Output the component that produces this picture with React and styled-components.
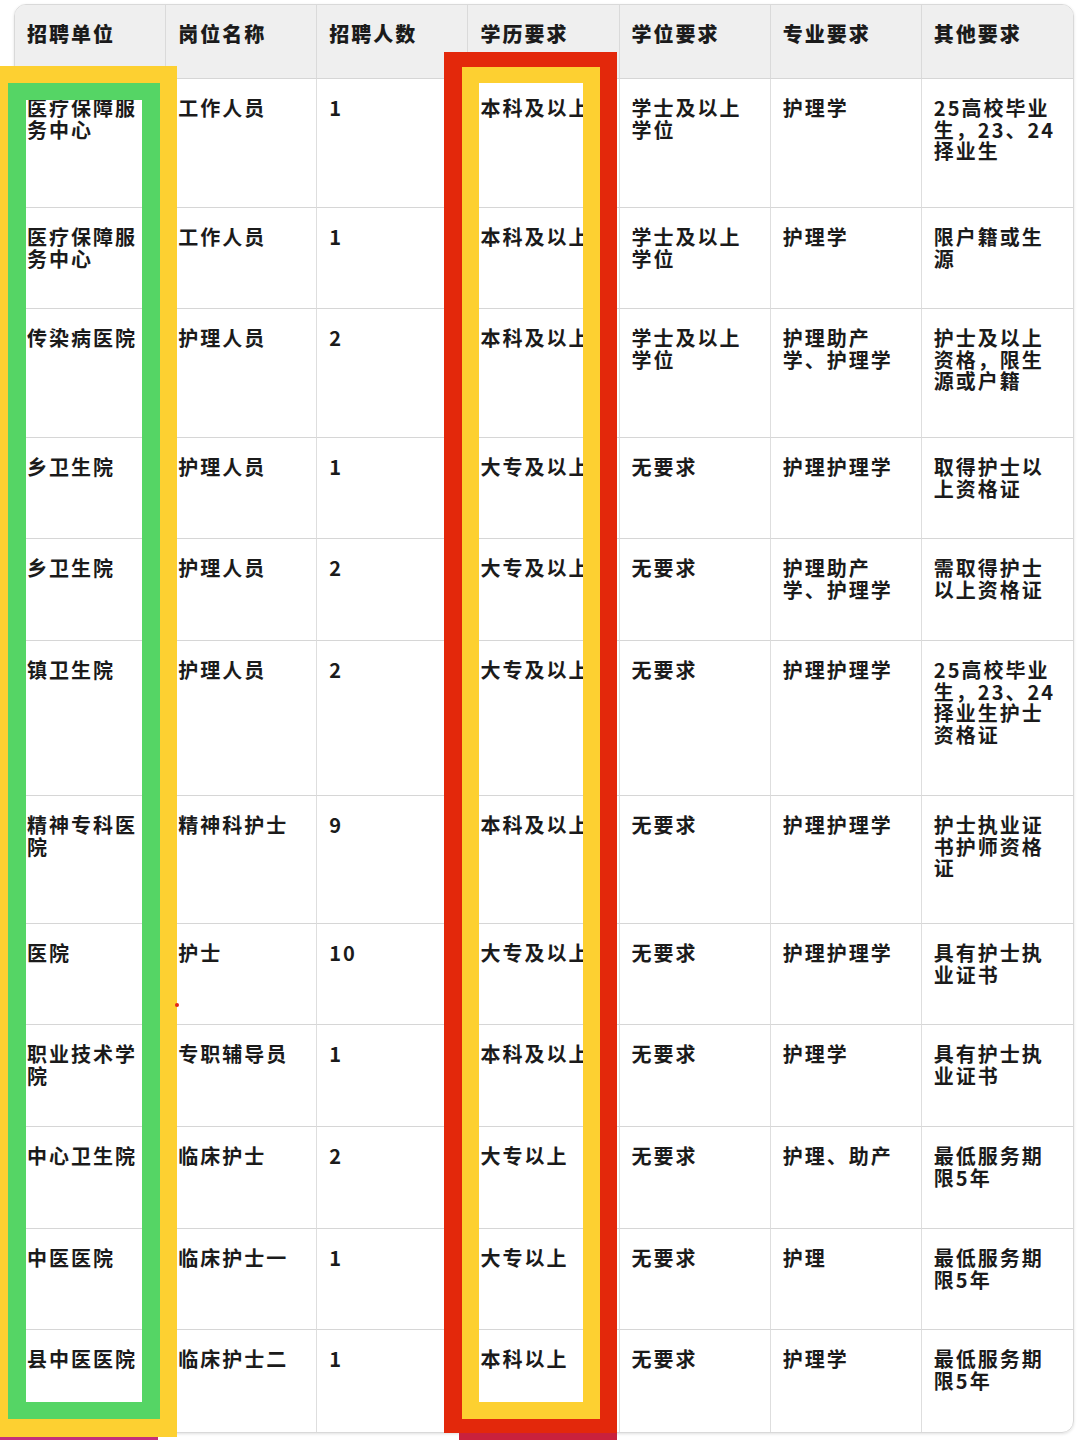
import React from 'react';
import styled, { createGlobalStyle } from 'styled-components';

const GlobalStyle = createGlobalStyle`
  html, body {
    margin: 0;
    padding: 0;
    background: #ffffff;
  }
  body {
    font-family: "Noto Sans CJK SC", "Noto Sans", sans-serif;
    color: #1b1b1b;
  }
`;

const Page = styled.div`
  position: relative;
  width: 1080px;
  height: 1440px;
  overflow: hidden;
  background: #ffffff;
  padding: 4px 6px 0 14px;
  box-sizing: border-box;
`;

const TableFrame = styled.div`
  width: 1060px;
  border: 1px solid #d9d9d9;
  border-radius: 12px;
  overflow: hidden;
  box-sizing: border-box;
  box-shadow: 0 1px 3px rgba(0, 0, 0, 0.12);
`;

const Table = styled.table`
  width: 100%;
  table-layout: fixed;
  border-collapse: separate;
  border-spacing: 0;
`;

const HeadCell = styled.th`
  background: #efefef;
  text-align: left;
  vertical-align: top;
  font-size: 20px;
  font-weight: 800;
  letter-spacing: 2px;
  line-height: 21.5px;
  padding: 18px 14px 0 12px;
  border-right: 1px solid #dadada;
  border-bottom: 1px solid #d6d6d6;
  box-sizing: border-box;
  &:last-child {
    border-right: none;
  }
`;

const Row = styled.tr`
  height: ${p => p.$h}px;
  &:last-child td {
    border-bottom: none;
  }
`;

const Cell = styled.td`
  vertical-align: top;
  font-size: 20px;
  font-weight: 600;
  letter-spacing: 2px;
  line-height: 21.5px;
  padding: 18px 14px 0 12px;
  border-right: 1px solid #dedede;
  border-bottom: 1px solid #d6d6d6;
  box-sizing: border-box;
  word-break: break-all;
  &:last-child {
    border-right: none;
  }
`;

/* highlight boxes drawn over the table */
const Outline = styled.div`
  position: absolute;
  display: flex;
  box-sizing: border-box;
  pointer-events: none;
  left: ${p => p.$x}px;
  top: ${p => p.$y}px;
  width: ${p => p.$w}px;
  height: ${p => p.$h}px;
  border: solid ${p => p.$c};
  border-width: ${p => p.$b};
`;

const InnerOutline = styled.div`
  flex: 1;
  box-sizing: border-box;
  border: solid ${p => p.$c};
  border-width: ${p => p.$b};
`;

const Strip = styled.div`
  position: absolute;
  left: ${p => p.$x}px;
  top: ${p => p.$y}px;
  width: ${p => p.$w}px;
  height: ${p => p.$h}px;
  background: ${p => p.$c};
`;

const Dot = styled.div`
  position: absolute;
  left: 175px;
  top: 1003px;
  width: 4px;
  height: 4px;
  border-radius: 50%;
  background: #e3261a;
`;

const headers = ['招聘单位', '岗位名称', '招聘人数', '学历要求', '学位要求', '专业要求', '其他要求'];

const rows = [
  [129, '医疗保障服务中心', '工作人员', '1', '本科及以上', '学士及以上学位', '护理学', '25高校毕业生，23、24择业生'],
  [101, '医疗保障服务中心', '工作人员', '1', '本科及以上', '学士及以上学位', '护理学', '限户籍或生源'],
  [129, '传染病医院', '护理人员', '2', '本科及以上', '学士及以上学位', '护理助产学、护理学', '护士及以上资格，限生源或户籍'],
  [101, '乡卫生院', '护理人员', '1', '大专及以上', '无要求', '护理护理学', '取得护士以上资格证'],
  [102, '乡卫生院', '护理人员', '2', '大专及以上', '无要求', '护理助产学、护理学', '需取得护士以上资格证'],
  [155, '镇卫生院', '护理人员', '2', '大专及以上', '无要求', '护理护理学', '25高校毕业生，23、24择业生护士资格证'],
  [128, '精神专科医院', '精神科护士', '9', '本科及以上', '无要求', '护理护理学', '护士执业证书护师资格证'],
  [101, '医院', '护士', '10', '大专及以上', '无要求', '护理护理学', '具有护士执业证书'],
  [102, '职业技术学院', '专职辅导员', '1', '本科及以上', '无要求', '护理学', '具有护士执业证书'],
  [102, '中心卫生院', '临床护士', '2', '大专以上', '无要求', '护理、助产', '最低服务期限5年'],
  [101, '中医医院', '临床护士一', '1', '大专以上', '无要求', '护理', '最低服务期限5年'],
  [102, '县中医医院', '临床护士二', '1', '本科以上', '无要求', '护理学', '最低服务期限5年'],
];

const YELLOW = '#fdd031';
const GREEN = '#55d565';
const RED = '#e3280b';

export default function App() {
  return (
    <>
      <GlobalStyle />
      <Page>
        <TableFrame>
          <Table>
            <thead>
              <Row $h={74}>
                {headers.map(h => (
                  <HeadCell key={h}>{h}</HeadCell>
                ))}
              </Row>
            </thead>
            <tbody>
              {rows.map(([h, ...cells], i) => (
                <Row key={i} $h={h}>
                  {cells.map((c, j) => (
                    <Cell key={j}>{c}</Cell>
                  ))}
                </Row>
              ))}
            </tbody>
          </Table>
        </TableFrame>

        <Outline $x={-9} $y={66} $w={186} $h={1371} $c={YELLOW} $b="17px 17px 18px 17px">
          <InnerOutline $c={GREEN} $b="17px 18px 17px 18px" />
        </Outline>
        <Strip $x={0} $y={1437} $w={158} $h={3} $c="#c3307c" />

        <Outline $x={444} $y={52} $w={173} $h={1381} $c={RED} $b="15px 17px 14px 18px">
          <InnerOutline $c={YELLOW} $b="16px 17px 17px 17px" />
        </Outline>
        <Strip $x={459} $y={1433} $w={158} $h={7} $c="#c9213d" />

        <Dot />
      </Page>
    </>
  );
}
